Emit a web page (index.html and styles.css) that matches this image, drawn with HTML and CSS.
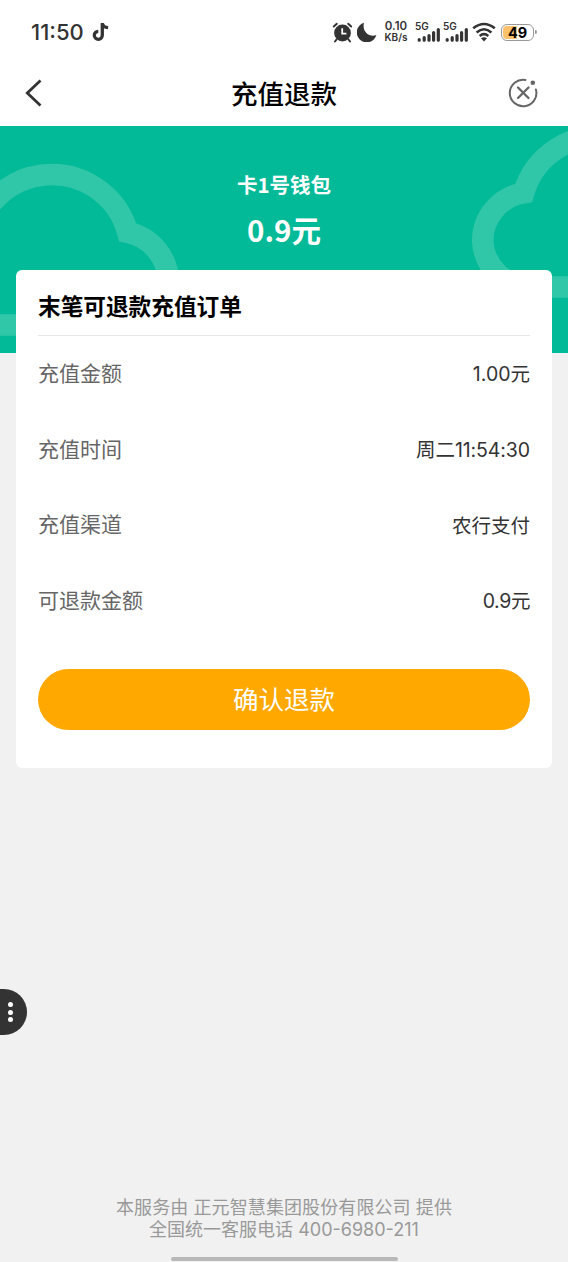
FILE: index.html
```html
<!DOCTYPE html>
<html lang="zh-CN">
<head>
<meta charset="utf-8">
<title>充值退款</title>
<link rel="stylesheet" href="styles.css">
</head>
<body>
<div class="screen">
  <header class="status">
    <span class="clock">11:50</span>
    <svg class="note" width="18" height="20" viewBox="0 0 18 20"><path d="M10.300 1v12.200a4 4 0 1 1-4-3.900M10.300 1.200c.5 2.900 2.500 4.200 5.800 4.400" fill="none" stroke="#333" stroke-width="3.300"/></svg>
    <svg class="alarm" width="21" height="21" viewBox="0 0 21 21"><circle cx="10.500" cy="11" r="8.400" fill="#333"/><path d="M1.800 4.500 4.800 1.800M19.200 4.500 16.200 1.800M4.500 17.500l-1.500 2M16.500 17.500l1.500 2" stroke="#333" stroke-width="2" stroke-linecap="round"/><path d="M10.200 6.300v5.300h4.200" fill="none" stroke="#fff" stroke-width="1.800"/></svg>
    <svg class="moon" width="20" height="20" viewBox="0 0 20 20"><path d="M7 .8A10 10 0 1 0 19.400 13C12.500 15.800 4.600 9.500 7 .8Z" fill="#333"/></svg>
    <div class="speed"><span>0.10</span><span>KB/s</span></div>
    <div class="signal"><span>5G</span><svg width="23" height="20" viewBox="0 0 23 20"><path d="M2.200 15.700v.5M7.200 13.500v2.700M12 11.500v4.700M16.600 8.500v7.700M21.300 5.500v10.700" stroke="#333" stroke-width="3.200" stroke-linecap="round"/></svg></div>
    <div class="signal"><span>5G</span><svg width="23" height="20" viewBox="0 0 23 20"><path d="M2.200 15.700v.5M7.200 13.500v2.700M12 11.500v4.700M16.600 8.500v7.700M21.300 5.500v10.700" stroke="#333" stroke-width="3.200" stroke-linecap="round"/></svg></div>
    <svg class="wifi" width="24" height="20" viewBox="0 0 24 20"><path d="M1.200 6.200Q12-2.200 22.800 6.200M4.600 10.400Q12 4.100 19.400 10.400M7.700 14Q12 10.400 16.300 14" fill="none" stroke="#333" stroke-width="2.600"/><path d="M9 16.200q3-2 6 0l-3 3.200Z" fill="#333"/></svg>
    <div class="battery"><span>49</span></div>
  </header>
  <nav class="nav">
    <svg width="20" height="28" viewBox="0 0 20 28"><path d="M18.500 1.500 5.300 14 18.500 26.500" fill="none" stroke="#333" stroke-width="2.800"/></svg>
    <h1>充值退款</h1>
    <svg width="30" height="30" viewBox="0 0 30 30"><path d="M17.400 1.900A13.300 13.300 0 1 0 27.900 11.400" fill="none" stroke="#666" stroke-width="2" stroke-linecap="round"/><circle cx="24.800" cy="4.800" r="2.300" fill="#666"/><path d="M10 9.500 20.500 20M20.500 9.500 10 20" stroke="#666" stroke-width="2.300" stroke-linecap="round"/></svg>
  </nav>
  <section class="hero">
    <svg class="clouds" width="568" height="227" viewBox="0 126 568 227"><g fill="none" stroke="#30c7a9" stroke-width="21.500"><path d="M-26.500 253A78.500 78.500 0 0 1 127.700 232.300A51.500 51.500 0 0 1 168.500 284Q168.500 325 119 325H-5"/><path d="M677.500 216A78.500 78.500 0 0 0 523.600 193A48.300 48.300 0 0 0 482.700 241A48.300 48.300 0 0 0 531 287H580"/></g></svg>
    <p class="wallet">卡1号钱包</p>
    <p class="balance">0.9元</p>
  </section>
  <main class="card">
    <h2>末笔可退款充值订单</h2>
    <dl>
      <div class="row"><dt>充值金额</dt><dd>1.00元</dd></div>
      <div class="row"><dt>充值时间</dt><dd class="time">周二11:54:30</dd></div>
      <div class="row"><dt>充值渠道</dt><dd>农行支付</dd></div>
      <div class="row"><dt>可退款金额</dt><dd class="refund">0.9元</dd></div>
    </dl>
    <button class="confirm">确认退款</button>
  </main>
  <div class="float"><i></i><i></i><i></i></div>
  <footer>
    <p class="company">本服务由 正元智慧集团股份有限公司 提供</p>
    <p class="phone">全国统一客服电话 400-6980-211</p>
    <div class="home"></div>
  </footer>
</div>
</body>
</html>
```
FILE: styles.css
```css
* { box-sizing: border-box; margin: 0; padding: 0; }
body { background: #f1f1f1; font-family: Inter, "Noto Sans CJK SC", sans-serif; }
.screen { position: relative; width: 568px; height: 1262px; overflow: hidden; display: flex; flex-direction: column; }
svg { display: block; flex: none; }
.status { height: 60px; padding: 4px 31px 0 31px; display: flex; align-items: center; background: #fff; color: #333; }
.clock { font: 500 22px/24px Inter, sans-serif; width: 54px; white-space: nowrap; }
.note { margin-left: 7px; }
.alarm { margin-left: auto; }
.moon { margin-left: 4px; }
.speed { margin-left: 7px; width: 24px; display: flex; flex-direction: column; align-items: center; font: 600 11.500px/11px Inter, sans-serif; }
.speed span:last-child { font-size: 10px; }
.signal { position: relative; width: 23px; margin-left: 9px; }
.signal + .signal { margin-left: 5px; }
.signal svg { position: relative; top: 2px; }
.signal span { position: absolute; left: -2px; top: -1px; font: 600 10px/10px Inter, sans-serif; }
.wifi { margin-left: 4px; }
.battery { position: relative; margin-left: 5px; width: 33px; height: 17px; border: 1.500px solid #999; border-radius: 6px; background: linear-gradient(90deg, #fbc16b 46%, #fff 50%); background-clip: content-box; padding: 1px; text-align: center; font: 700 14.500px/13px Inter, sans-serif; color: #000; margin-right: 3px; }
.battery::after { content: ""; position: absolute; right: -4px; top: 5px; width: 2px; height: 4px; background: #999; border-radius: 0 2px 2px 0; }
.nav { height: 66px; padding: 0 30px 0 22px; display: flex; align-items: center; justify-content: space-between; background: #fff; }
.nav h1 { font-size: 26.500px; line-height: 40px; font-weight: 500; color: #000; padding: 2px 0 0 18px; }
.hero { position: relative; height: 227px; background: #02b998; color: #fff; text-align: center; padding-top: 43px; flex: none; font-family: "Noto Sans CJK SC", sans-serif; }
.clouds { position: absolute; left: 0; top: 0; }
.hero p { position: relative; }
.wallet { font-size: 20.500px; line-height: 30px; font-weight: 700; }
.balance { font-size: 29.500px; line-height: 44px; font-weight: 700; margin-top: 8px; }
.card { position: relative; margin: -83px 16px 0; height: 498px; background: #fff; border-radius: 6px; padding: 0 22px; }
.card h2 { height: 66px; padding-top: 5px; border-bottom: 1px solid #e6e6e6; font-size: 22.670px; line-height: 64px; font-weight: 700; color: #000; white-space: nowrap; }
.row { height: 75.700px; display: flex; align-items: center; justify-content: space-between; }
dt { font-size: 21px; color: #666; padding-bottom: 4px; }
dd { font-size: 19.500px; color: #333; padding-bottom: 2px; }
.time { letter-spacing: -.1px; }
.refund { letter-spacing: -.4px; }
.confirm { display: block; width: 100%; height: 61px; margin-top: 30px; border: 0; border-radius: 31px; background: #ffa800; color: #fff; font: 400 25.500px/61px Inter, "Noto Sans CJK SC", sans-serif; }
.float { position: absolute; left: 0; top: 989px; width: 27px; height: 46px; border-radius: 0 23px 23px 0; background: #333; display: flex; flex-direction: column; align-items: center; justify-content: center; gap: 2.200px; padding-right: 7px; }
.float i { width: 5px; height: 5px; border-radius: 50%; background: #fff; }
footer { margin-top: auto; display: flex; flex-direction: column; align-items: center; color: #999; font-size: 18px; line-height: 22px; white-space: nowrap; }
.company { letter-spacing: .1px; }
.home { width: 227px; height: 4px; margin: 16px 0 1px; border-radius: 2px; background: #b8b8b8; }
```
